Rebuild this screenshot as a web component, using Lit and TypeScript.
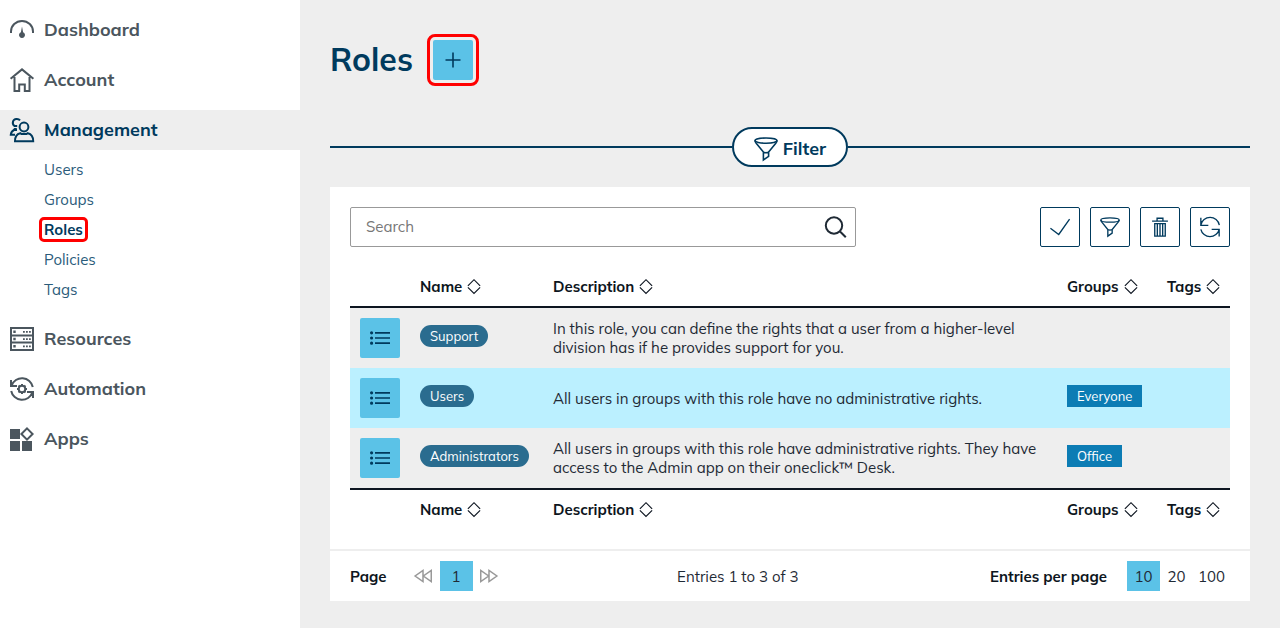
import { LitElement, html, css, svg, TemplateResult } from "lit";
import { customElement, state } from "lit/decorators.js";
import { classMap } from "lit/directives/class-map.js";

const icons: Record<string, TemplateResult> = {
  dashboard: svg`
    <path d="M1 15v-1.500a11 10.500 0 0 1 22 0v1.500"/>
    <path d="M12 8.500l1.100 5.700a3 3 0 1 1-2.200 0z" fill="currentColor" stroke="none"/>`,
  account: svg`<path d="M.6 10.800 12 1.400l11.400 9.400M4.500 9V23H9.200v-6.500h5.600V23h4.700V9"/>`,
  management: svg`
    <circle cx="14" cy="9" r="4.400"/>
    <path d="M5 23.200c0-5 2.600-7.400 5.200-8 1.200 1.200 6.400 1.200 7.600 0 2.600.6 5.400 3 5.400 8z"/>
    <path d="M10 2.300C8.500.300 4 .200 3 3.500c-.6 2 .3 3.600 1.500 4.500h2.700M6.800 11H4.700l-1 1H7M4 12c-2 .9-3 2.600-3.200 4.700H5"/>`,
  resources: svg`
    <path d="M1 1h22v22H1zM1 8.400h22M1 15.600h22"/>
    <path d="M3.300 3.600h2.400v2.400H3.300zM3.300 10.800h2.400v2.400H3.300zM3.300 18h2.400v2.400H3.300zM13 4h1.800v1.800H13zM16 4h1.800v1.800H16zM19 4h1.800v1.800H19zM13 11.200h1.800V13H13zM16 11.200h1.800V13H16zM19 11.200h1.800V13H19zM13 18.400h1.800v1.800H13zM16 18.400h1.800v1.800H16zM19 18.400h1.800v1.800H19z" fill="currentColor" stroke="none"/>`,
  automation: svg`
    <path d="M1 3v6h6M1.600 8.600A11 11 0 0 1 22.800 10M23 21v-6h-6M22.400 15.400A11 11 0 0 1 1.200 14"/>
    <circle cx="12" cy="12" r="3.300"/>
    <path d="M12 7v1.700M12 15.300V17M7 12h1.700M15.300 12H17M8.500 8.500l1.200 1.200M14.300 14.300l1.200 1.200M15.500 8.500l-1.200 1.200M9.700 14.300l-1.200 1.200"/>`,
  apps: svg`
    <path d="M0 2h10v10H0zM0 14h10v10H0zM12 14h10v10H12z" fill="currentColor" stroke="none"/>
    <path d="M17 1.400 22.600 7 17 12.600 11.400 7z"/>`,
  plus: svg`<path d="M12 4.500v15M4.500 12h15"/>`,
  funnel: svg`
    <ellipse cx="12" cy="3.600" rx="11" ry="2.600"/>
    <path d="M1 3.600c0 1 .5 1.700 1.200 2.600L9.400 15v8l5.200-3.600V15l7.200-8.800c.7-.9 1.200-1.600 1.200-2.600M9.400 15.200c1.500.6 3.700.6 5.200 0"/>`,
  search: svg`<circle cx="11" cy="10.500" r="8.200"/><path d="m17 16.500 5.800 5.800"/>`,
  check: svg`<path d="m.5 13.500 10 7.500L23.500 2.500"/>`,
  trash: svg`
    <path d="M2.500 5h19M8.500 5V1.500h7V5M5.700 8h12.600v15H5.700zM8.800 8v15M12 8v15M15.200 8v15"/>`,
  refresh: svg`<path d="M1 1v9h9M1 9.700A11.300 11.300 0 0 1 23.200 9.700M23 23.500v-8.700h-9M23 14.800A11.300 11.300 0 0 1 1 14.800"/>`,
  list: svg`
    <path d="M6 5.800h18M6 12h18M6 18.200h18"/>
    <path d="M0 5.800a1.900 1.900 0 1 0 3.800 0 1.900 1.900 0 1 0-3.800 0M0 12a1.900 1.900 0 1 0 3.800 0 1.900 1.900 0 1 0-3.800 0M0 18.200a1.900 1.900 0 1 0 3.800 0 1.900 1.900 0 1 0-3.800 0" fill="currentColor" stroke="none"/>`,
  sort: svg`<path d="M1.500 10 12-.500l10.500 10.500M1.500 12.500 12 23l10.500-10.500"/>`,
  back: svg`<path d="M12 4.500v15L1.500 12zM23 4.500v15L12.500 12z"/>`,
  forward: svg`<path d="M12 4.500v15L22.500 12zM1 4.500v15L11.500 12z"/>`,
};

const icon = (name: string, cls = "") =>
  html`<svg class="icon ${cls}" viewBox="0 0 24 24" aria-hidden="true">${icons[name]}</svg>`;

interface Role {
  name: string;
  description: string;
  group?: string;
}

const ROLES: Role[] = [
  {
    name: "Support",
    description:
      "In this role, you can define the rights that a user from a higher-level division has if he provides support for you.",
  },
  {
    name: "Users",
    description: "All users in groups with this role have no administrative rights.",
    group: "Everyone",
  },
  {
    name: "Administrators",
    description:
      "All users in groups with this role have administrative rights. They have access to the Admin app on their oneclick™ Desk.",
    group: "Office",
  },
];

const SECTIONS = [
  { icon: "dashboard", label: "Dashboard" },
  { icon: "account", label: "Account" },
  {
    icon: "management",
    label: "Management",
    children: ["Users", "Groups", "Roles", "Policies", "Tags"],
  },
  { icon: "resources", label: "Resources" },
  { icon: "automation", label: "Automation" },
  { icon: "apps", label: "Apps" },
];

@customElement("app-root")
export class AppRoot extends LitElement {
  @state() private pageSize = 10;

  static styles = css`
    :host {
      display: grid;
      grid-template-columns: 300px minmax(0, 1fr);
      min-height: 100vh;
      background: #eee;
      color: #1f2a35;
      font: 15px/19px Mulish, Muli, Lato, sans-serif;
    }
    * {
      box-sizing: border-box;
    }
    a {
      color: inherit;
      text-decoration: none;
    }
    ul {
      list-style: none;
      margin: 0;
      padding: 0;
    }
    button {
      font: inherit;
      color: inherit;
      background: none;
      border: 0;
      padding: 0;
      cursor: pointer;
    }
    .icon {
      display: block;
      flex: none;
      width: 24px;
      height: 24px;
      fill: none;
      stroke: currentColor;
      stroke-width: 2;
      overflow: visible;
    }
    .icon.medium {
      width: 20px;
      height: 20px;
    }
    .icon.small {
      width: 14px;
      height: 14px;
    }
    .icon.pager {
      width: 18px;
      height: 18px;
      color: #999;
    }
    .icon.thin {
      stroke-width: 1.6;
    }

    .sidebar {
      background: #fff;
      padding: 10px 0;
    }
    .sections {
      display: flex;
      flex-direction: column;
      gap: 10px;
    }
    .section {
      display: flex;
      align-items: center;
      gap: 10px;
      height: 40px;
      padding: 0 10px;
      color: #4b565e;
      font-size: 18px;
      font-weight: 700;
    }
    .section.active {
      background: #eee;
      color: #003a5d;
    }
    .label {
      padding-bottom: 2px;
    }
    .children {
      padding: 4px 0 5px 44px;
      color: #2a5b7a;
    }
    .child {
      display: flex;
      align-items: center;
      height: 30px;
    }
    .child .current {
      margin-left: -2px;
      padding: 0 2px;
      border-radius: 2px;
      outline: 3px solid #f00;
      color: #003a5d;
      font-weight: 700;
    }

    .main {
      padding: 40px 30px 27px;
    }
    .heading {
      display: flex;
      align-items: center;
      gap: 20px;
      height: 40px;
    }
    h1 {
      margin: 0;
      padding-bottom: 2px;
      color: #003a5d;
      font-size: 32px;
      line-height: 40px;
      font-weight: 700;
    }
    .square {
      display: flex;
      align-items: center;
      justify-content: center;
      width: 40px;
      height: 40px;
      border-radius: 2px;
      background: #5bc2e7;
      color: #003a5d;
    }
    .square.marked {
      outline: 3px solid #f00;
      outline-offset: 3px;
    }
    .divider {
      display: flex;
      align-items: center;
      margin: 47px 0 20px;
    }
    .divider::before,
    .divider::after {
      content: "";
      flex: 1;
      height: 2px;
      background: #003a5d;
    }
    .filter {
      display: flex;
      align-items: center;
      gap: 5px;
      height: 40px;
      padding: 3px 20px 0;
      border: 2px solid #003a5d;
      border-radius: 20px;
      background: #fff;
      color: #003a5d;
      font-size: 18px;
      font-weight: 700;
    }

    .card {
      background: #fff;
    }
    .content {
      padding: 20px;
    }
    .toolbar {
      display: flex;
      justify-content: space-between;
      margin-bottom: 20px;
    }
    .search {
      display: flex;
      align-items: center;
      width: 57.5%;
      height: 40px;
      padding: 0 8px 0 15px;
      border: 1px solid #999;
      border-radius: 2px;
      color: #1f2a35;
    }
    .search input {
      flex: 1;
      min-width: 0;
      padding: 0 0 2px;
      border: 0;
      outline: 0;
      background: none;
      font: inherit;
      color: inherit;
    }
    .search input::placeholder {
      color: #777;
      opacity: 1;
    }
    .tools {
      display: flex;
      gap: 10px;
    }
    .tool {
      display: flex;
      align-items: center;
      justify-content: center;
      width: 40px;
      height: 40px;
      border: 1px solid #003a5d;
      border-radius: 2px;
      color: #003a5d;
    }

    table {
      width: 100%;
      table-layout: fixed;
      border-collapse: separate;
      border-spacing: 0;
    }
    .col-action {
      width: 60px;
    }
    .col-name {
      width: 133px;
    }
    .col-groups {
      width: 100px;
    }
    .col-tags {
      width: 73px;
    }
    th {
      height: 41px;
      padding: 0 10px;
      text-align: left;
      color: #0d1520;
    }
    thead th {
      border-bottom: 2px solid #0d1520;
    }
    tfoot th {
      border-top: 2px solid #0d1520;
    }
    .sort {
      display: flex;
      align-items: center;
      gap: 5px;
      font-weight: 700;
    }
    td {
      height: 60px;
      padding: 0 10px;
      background: #eee;
    }
    tr:nth-child(even) td {
      background: #bbf0ff;
    }
    .pill,
    .tag {
      display: inline-block;
      margin-bottom: 4px;
      padding: 0 10px;
      color: #fff;
      font-size: 13px;
      line-height: 22px;
      vertical-align: middle;
    }
    .pill {
      border-radius: 11px;
      background: #2a6c8f;
    }
    .tag {
      background: #0c7cb4;
    }

    .footer {
      display: flex;
      align-items: center;
      height: 52px;
      padding: 0 20px;
      border-top: 2px solid #eee;
    }
    .pages {
      display: flex;
      align-items: center;
    }
    .pages.sizes {
      margin-left: 20px;
    }
    .pages-label {
      margin-right: 20px;
      color: #0d1520;
      font-weight: 700;
    }
    .page {
      display: flex;
      align-items: center;
      justify-content: center;
      min-width: 33px;
      height: 30px;
      padding: 0 5px;
    }
    .page.active {
      background: #5bc2e7;
    }
    .summary {
      flex: 1;
      text-align: center;
    }
  `;

  private sortHeaders() {
    return html`<tr>
      <th></th>
      ${["Name", "Description", "Groups", "Tags"].map(
        (label) => html`<th scope="col">
          <button class="sort">${label}${icon("sort", "small")}</button>
        </th>`
      )}
    </tr>`;
  }

  render() {
    return html`
      <nav class="sidebar" aria-label="Main">
        <ul class="sections">
          ${SECTIONS.map(
            (s) => html`<li>
              <a href="#" class=${classMap({ section: true, active: !!s.children })}>
                ${icon(s.icon)}<span class="label">${s.label}</span>
              </a>
              ${s.children
                ? html`<ul class="children">
                    ${s.children.map(
                      (c) => html`<li class="child">
                        <a href="#" class=${classMap({ current: c === "Roles" })}>${c}</a>
                      </li>`
                    )}
                  </ul>`
                : ""}
            </li>`
          )}
        </ul>
      </nav>
      <main class="main">
        <header class="heading">
          <h1>Roles</h1>
          <button class="square marked" aria-label="Add role">${icon("plus", "thin")}</button>
        </header>
        <div class="divider">
          <button class="filter">${icon("funnel", "thin")}Filter</button>
        </div>
        <section class="card">
          <div class="content">
            <div class="toolbar">
              <label class="search">
                <input type="text" placeholder="Search" aria-label="Search" />
                ${icon("search")}
              </label>
              <div class="tools">
                <button class="tool" aria-label="Select">${icon("check", "medium thin")}</button>
                <button class="tool" aria-label="Filter">${icon("funnel", "medium thin")}</button>
                <button class="tool" aria-label="Delete">${icon("trash", "medium thin")}</button>
                <button class="tool" aria-label="Refresh">${icon("refresh", "medium thin")}</button>
              </div>
            </div>
            <table>
              <colgroup>
                <col class="col-action" />
                <col class="col-name" />
                <col />
                <col class="col-groups" />
                <col class="col-tags" />
              </colgroup>
              <thead>
                ${this.sortHeaders()}
              </thead>
              <tbody>
                ${ROLES.map(
                  (r) => html`<tr>
                    <td>
                      <button class="square" aria-label="Actions">${icon("list", "medium")}</button>
                    </td>
                    <td><span class="pill">${r.name}</span></td>
                    <td>${r.description}</td>
                    <td>${r.group ? html`<span class="tag">${r.group}</span>` : ""}</td>
                    <td></td>
                  </tr>`
                )}
              </tbody>
              <tfoot>
                ${this.sortHeaders()}
              </tfoot>
            </table>
          </div>
          <footer class="footer">
            <div class="pages">
              <span class="pages-label">Page</span>
              <button class="page" aria-label="Previous">${icon("back", "pager")}</button>
              <button class="page active">1</button>
              <button class="page" aria-label="Next">${icon("forward", "pager")}</button>
            </div>
            <span class="summary">Entries 1 to 3 of 3</span>
            <div class="pages sizes">
              <span class="pages-label">Entries per page</span>
              ${[10, 20, 100].map(
                (n) => html`<button
                  class=${classMap({ page: true, active: n === this.pageSize })}
                  @click=${() => (this.pageSize = n)}
                >
                  ${n}
                </button>`
              )}
            </div>
          </footer>
        </section>
      </main>
    `;
  }
}
